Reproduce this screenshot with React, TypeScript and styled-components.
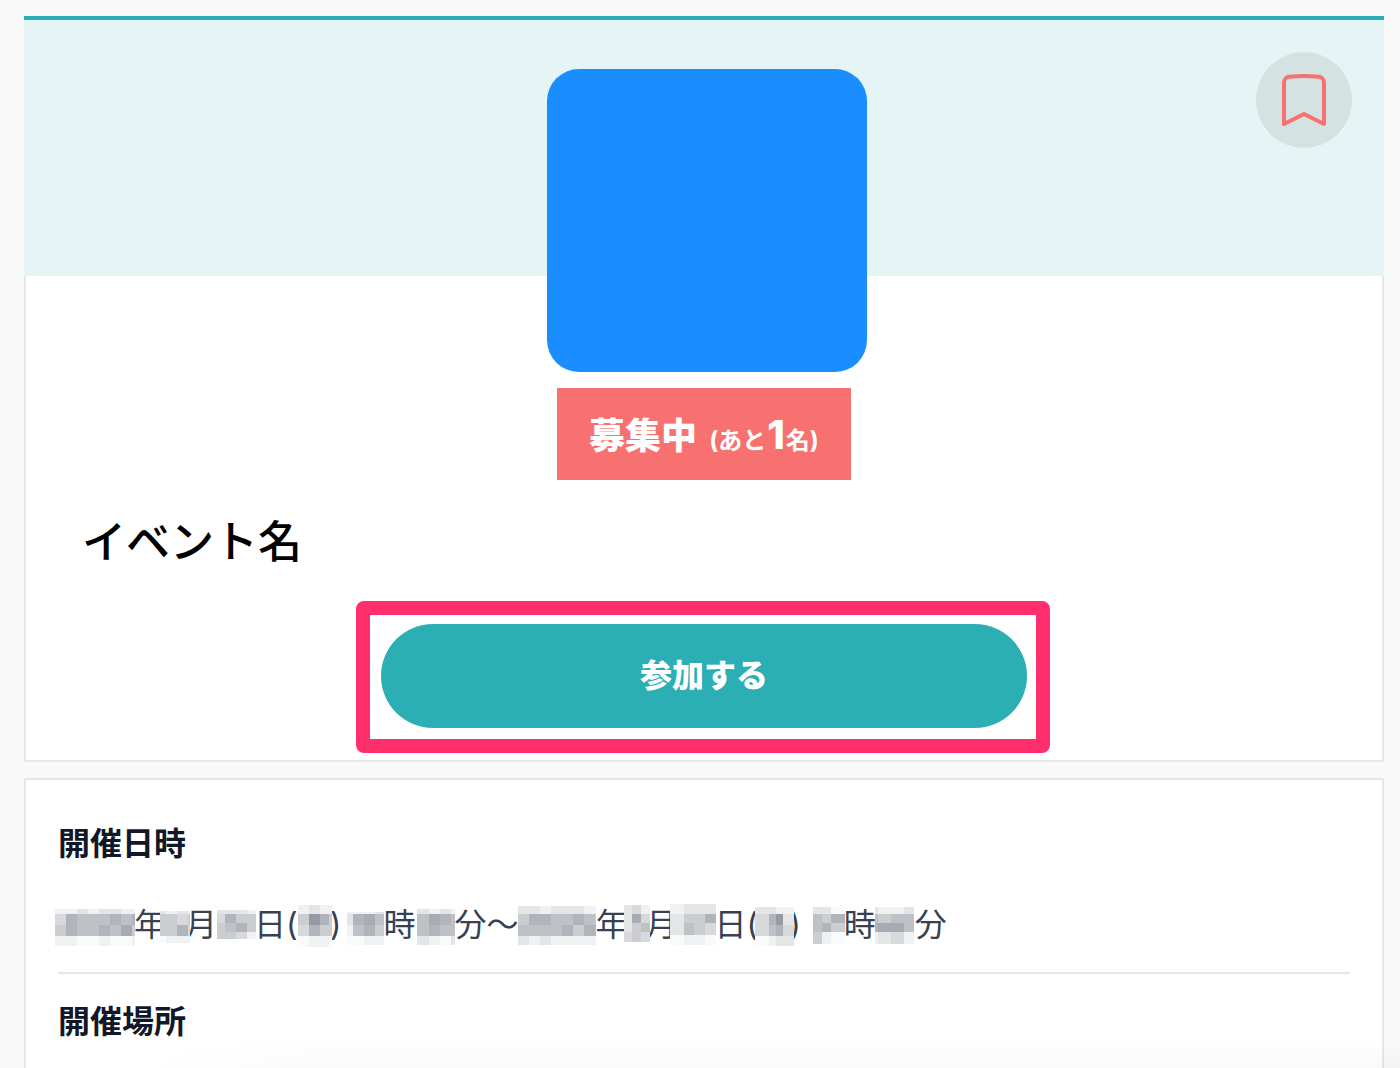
import React from 'react';
import styled, { createGlobalStyle } from 'styled-components';

const GlobalStyle = createGlobalStyle`
  *, *::before, *::after { box-sizing: border-box; }
  html { scrollbar-width: none; }
  body {
    margin: 0;
    background: #f9f9f9;
    color: #111827;
    font-family: Inter, "Noto Sans CJK JP", sans-serif;
  }
  h1, h2, p { margin: 0; }
`;

const Page = styled.main`
  display: flex;
  flex-direction: column;
  gap: 16px;
  padding: 16px 16px 0 24px;
`;

const Hero = styled.header`
  position: relative;
  display: flex;
  justify-content: center;
  height: 260px;
  padding: 49px 0 0 6px;
  border-top: 4px solid #2cafb4;
  background: #e5f5f5;
`;

const EventImage = styled.div`
  flex: none;
  width: 320px;
  height: 303px;
  border-radius: 32px;
  background: #1a8eff;
`;

const BookmarkButton = styled.button`
  position: absolute;
  top: 32px;
  right: 32px;
  display: grid;
  place-items: center;
  width: 96px;
  height: 96px;
  padding: 0;
  border: 0;
  border-radius: 50%;
  background: #d4e2e2;
  color: #f87171;
  cursor: pointer;
`;

const Summary = styled.div`
  display: flex;
  flex-direction: column;
  align-items: center;
  padding: 112px 32px 32px;
  border: 2px solid #e5e7eb;
  border-top: 0;
  background: #fff;
`;

const Status = styled.p`
  display: flex;
  align-items: baseline;
  gap: 12px;
  padding: 4px 32px 0;
  background: #f87171;
  color: #fff;
  font-size: 36px;
  font-weight: 900;
  line-height: 88px;
  white-space: nowrap;
`;

const Remaining = styled.span`
  font-size: 24px;
  font-weight: 700;
  line-height: 24px;
`;

const RemainingCount = styled.span`
  padding: 0 1px;
  font-size: 40px;
  font-weight: 800;
  line-height: 40px;
`;

const Title = styled.h1`
  align-self: stretch;
  margin: 32px 0 52px;
  padding: 0 24px;
  color: #000;
  font-size: 44px;
  font-weight: 500;
  line-height: 60px;
`;

const JoinArea = styled.div`
  position: relative;
  width: 100%;
  max-width: 646px;
`;

const JoinButton = styled.button`
  width: 100%;
  padding: 28px 32px;
  border: 0;
  border-radius: 52px;
  background: #2cafb4;
  color: #fff;
  font: inherit;
  font-size: 32px;
  font-weight: 900;
  line-height: 48px;
  cursor: pointer;
`;

const Highlight = styled.div`
  position: absolute;
  inset: -23px -23px -25px -25px;
  border: 14px solid #ff2e6d;
  border-radius: 8px;
  pointer-events: none;
`;

const Details = styled.div`
  padding: 16px 32px;
  border: 2px solid #e5e7eb;
  background: #fff;
`;

const DetailSection = styled.section`
  padding: 24px 0 22px;

  & + & {
    border-top: 2px solid #e5e7eb;
  }
`;

const DetailHeading = styled.h2`
  font-size: 32px;
  font-weight: 700;
  line-height: 48px;
`;

const Schedule = styled.p`
  display: flex;
  margin-top: 32px;
  color: #374151;
  font-size: 32px;
  line-height: 50px;
  white-space: nowrap;
`;

const Hidden = styled.span<{ $width: number }>`
  position: relative;
  flex: none;
  width: ${(p) => p.$width}px;
`;

const MosaicDrawing = styled.svg<{ $x: number; $y: number }>`
  position: absolute;
  left: ${(p) => p.$x}px;
  top: ${(p) => p.$y}px;
`;

const BottomShade = styled.div`
  position: fixed;
  right: 0;
  bottom: 0;
  left: 140px;
  height: 28px;
  background: linear-gradient(to bottom, rgba(0, 0, 0, 0), rgba(0, 0, 0, 0.02));
  mask-image: linear-gradient(to right, transparent, #000 200px);
  pointer-events: none;
`;

const tones: Record<string, string> = {
  a: '#f9fafa',
  b: '#f0f1f2',
  c: '#e4e5e7',
  d: '#d7d9dc',
  e: '#cbcdd1',
  f: '#bec1c6',
  g: '#b2b4bb',
  h: '#a8abb3',
  i: '#969aa3',
};

type MosaicProps = {
  width: number;
  x: number;
  y: number;
  cols: number[];
  rows: number[];
  cells: string[];
};

const startOf = (sizes: number[], index: number) =>
  sizes.slice(0, index).reduce((sum, size) => sum + size, 0);

function Mosaic({ width, x, y, cols, rows, cells }: MosaicProps) {
  const w = startOf(cols, cols.length);
  const h = startOf(rows, rows.length);
  return (
    <Hidden $width={width}>
      <MosaicDrawing $x={x} $y={y} width={w} height={h} shapeRendering="crispEdges" aria-hidden="true">
        {cells.flatMap((line, r) =>
          line.split('').map((tone, c) => (
            <rect
              key={`${r}-${c}`}
              x={startOf(cols, c)}
              y={startOf(rows, r)}
              width={cols[c]}
              height={rows[r]}
              fill={tones[tone]}
            />
          )),
        )}
      </MosaicDrawing>
    </Hidden>
  );
}

function BookmarkIcon() {
  return (
    <svg width="64" height="64" viewBox="0 0 24 24" fill="none" stroke="currentColor" strokeWidth="1.5" strokeLinecap="round" strokeLinejoin="round" aria-hidden="true">
      <path d="M17.593 3.322c1.1.128 1.907 1.077 1.907 2.185V21L12 17.25 4.5 21V5.507c0-1.108.806-2.057 1.907-2.185a48.507 48.507 0 0 1 11.186 0z" />
    </svg>
  );
}

export default function App() {
  return (
    <>
      <GlobalStyle />
      <Page>
        <article>
          <Hero>
            <EventImage />
            <BookmarkButton type="button" aria-label="ブックマーク">
              <BookmarkIcon />
            </BookmarkButton>
          </Hero>
          <Summary>
            <Status>
              募集中
              <Remaining>(あと<RemainingCount>1</RemainingCount>名)</Remaining>
            </Status>
            <Title>イベント名</Title>
            <JoinArea>
              <JoinButton type="button">参加する</JoinButton>
              <Highlight />
            </JoinArea>
          </Summary>
        </article>
        <Details>
          <DetailSection>
            <DetailHeading>開催日時</DetailHeading>
            <Schedule>
              <Mosaic width={76} x={-3} y={9} cols={[11, 11, 11, 11, 11, 11, 11, 3]} rows={[5, 11, 11, 10]}
                cells={['bbcbccbb', 'dgfffgfg', 'egffgfhe', 'bbaabaab']} />
              年
              <Mosaic width={19} x={-6} y={11} cols={[6, 11, 11, 2]} rows={[3, 11, 11, 7]}
                cells={['cbcb', 'eede', 'eegd', 'abbb']} />
              月
              <Mosaic width={37} x={0} y={10} cols={[8, 11, 11, 9]} rows={[4, 9, 9, 7]}
                cells={['cccb', 'dgee', 'efge', 'eedb']} />
              日(
              <Mosaic width={32} x={0} y={5} cols={[11, 11, 9, 3]} rows={[9, 11, 11, 11]}
                cells={['bcbb', 'eige', 'dgee', 'abba']} />
              )
              <Mosaic width={42} x={6} y={12} cols={[6, 11, 11, 9]} rows={[2, 11, 11, 9]}
                cells={['bbbc', 'cghf', 'bfge', 'aabb']} />
              時
              <Mosaic width={39} x={2} y={9} cols={[12, 11, 11, 4]} rows={[5, 11, 11, 9]}
                cells={['cbcb', 'fhgf', 'fgff', 'cbac']} />
              分〜
              <Mosaic width={77} x={0} y={6} cols={[11, 11, 11, 11, 11, 11, 11, 1]} rows={[8, 11, 11, 9]}
                cells={['ccbcccbb', 'eggffgfe', 'ffffgegg', 'cbcbbbbb']} />
              年
              <Mosaic width={18} x={-3} y={5} cols={[8, 9, 9]} rows={[9, 9, 9, 10]}
                cells={['cdb', 'chd', 'cef', 'ded']} />
              月
              <Mosaic width={37} x={-7} y={4} cols={[14, 10, 11, 11]} rows={[10, 9, 12, 10]}
                cells={['bccc', 'ceeg', 'cfed', 'abba']} />
              日(
              <Mosaic width={31} x={-3} y={7} cols={[14, 7, 7, 11]} rows={[7, 11, 11, 10]}
                cells={['ccbb', 'dgic', 'dfgd', 'abcc']} />
              )
              <Mosaic width={43} x={12} y={7} cols={[9, 9, 14]} rows={[7, 9, 9, 12]}
                cells={['cca', 'feg', 'fge', 'eba']} />
              時
              <Mosaic width={39} x={-1} y={7} cols={[3, 13, 13, 10]} rows={[7, 9, 9, 12]}
                cells={['cbbc', 'feff', 'ghhf', 'bcdb']} />
              分
            </Schedule>
          </DetailSection>
          <DetailSection>
            <DetailHeading>開催場所</DetailHeading>
          </DetailSection>
        </Details>
      </Page>
      <BottomShade />
    </>
  );
}
